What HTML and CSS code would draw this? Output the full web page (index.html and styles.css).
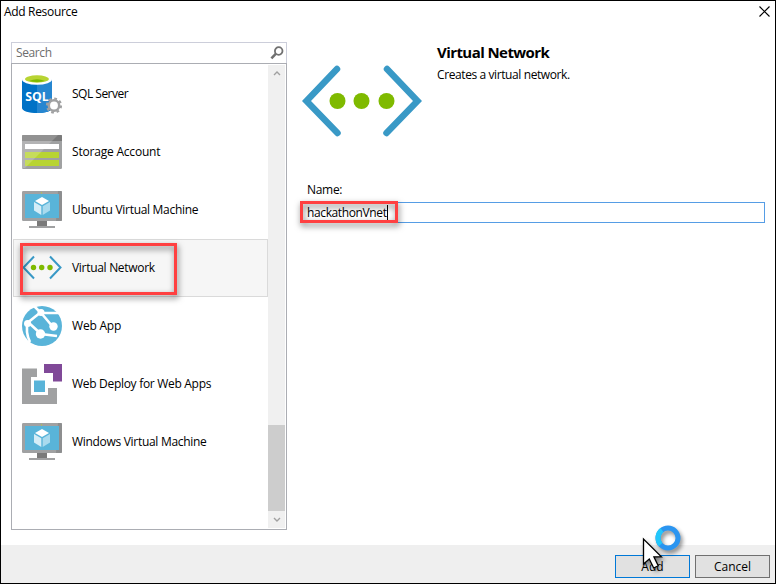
FILE: index.html
```html
<!DOCTYPE html>
<html lang="en">
<head>
<meta charset="utf-8">
<title>Add Resource</title>
<link rel="stylesheet" href="styles.css">
</head>
<body>
<svg width="0" height="0" class="defs">
  <defs>
    <symbol id="vnet" viewBox="0 0 120 120">
      <path d="M35 27 4.500 59l31 32M85 27l30.500 32-31 32" fill="none" stroke="#3999c6" stroke-width="6.500" stroke-linecap="round"/>
      <g fill="#7fba00"><circle cx="35.500" cy="59" r="8"/><circle cx="59.500" cy="59" r="8"/><circle cx="84.500" cy="59" r="8"/></g>
    </symbol>
    <symbol id="vm" viewBox="0 0 40 40">
      <rect x="0" y="1" width="40" height="30" rx="1.300" fill="#a0a1a2"/>
      <path d="M36 1h2.700q1.300 0 1.300 1.300V30q0 1-1.300 1H34z" fill="#8d8e8f"/>
      <rect x="3" y="4" width="34" height="24" fill="#59b4d9"/>
      <path d="M15 31h10v5H15z" fill="#7a7a7a"/><path d="M7 36h26v2H7z" fill="#a0a1a2"/>
      <path d="m20 7 7 4-7 4-7-4z" fill="#fff"/>
      <path d="m12 12 7.300 4.300V25L12 20.600z" fill="#d5edf7"/>
      <path d="m28 12-7.300 4.300V25l7.300-4.400z" fill="#a9daee"/>
      <circle cx="19.500" cy="2.800" r=".6" fill="#b8d432"/>
    </symbol>
  </defs>
</svg>
<div class="window">
  <header class="titlebar"><span class="title">Add Resource</span>
    <svg class="close" width="11" height="11" viewBox="0 0 11 11"><path d="m.5.5 10 10m0-10-10 10" stroke="#000" stroke-width="1.150"/></svg>
  </header>
  <main class="body">
    <section class="picker">
      <div class="search"><span>Search</span>
        <svg width="14" height="14" viewBox="0 0 14 14"><circle cx="8.700" cy="5" r="3.800" fill="none" stroke="#717171" stroke-width="1.800"/><path d="M6 7.700 1.400 12.300" stroke="#717171" stroke-width="2.600"/></svg>
      </div>
      <div class="list">
        <div class="items">
          <div class="item">
            <svg width="40" height="40" viewBox="0 0 40 40">
              <path d="M0 5v29c0 3 7 5 15 5s15-2 15-5V5z" fill="#0072c6"/>
              <path d="M15 5v34c8 0 15-2 15-5V5z" fill="#2686d0"/>
              <ellipse cx="15" cy="5.500" rx="15" ry="5.200" fill="#fff"/><ellipse cx="15" cy="5" rx="12" ry="3.700" fill="#b8d432"/><path d="M7 7q8-3.500 16 0-8 2-16 0" fill="#7fba00"/>
              <text x="3.300" y="27" class="sql" textLength="23.500" lengthAdjust="spacingAndGlyphs">SQL</text>
              <circle cx="32" cy="31.500" r="5.200" fill="#fff" stroke="#a0a1a2" stroke-width="2.500"/>
              <circle cx="32" cy="31.500" r="7" fill="none" stroke="#a0a1a2" stroke-width="2.200" stroke-dasharray="2.750 2.750"/>
            </svg><span class="t1">SQL Server</span></div>
          <div class="item">
            <svg width="40" height="40" viewBox="0 0 40 40">
              <rect x="0" y="3" width="40" height="34" rx="1.300" fill="#a0a1a2"/><path d="M1.300 3h37.400Q40 3 40 4.300V9H0V4.300Q0 3 1.300 3" fill="#929292"/><path d="M36 3h2.700Q40 3 40 4.300V9H30z" fill="#7a7a7a"/>
              <path d="M3 12h34v5H3z" fill="#fff"/><path d="M3 20h34v6H3zm0 8h34v6H3z" fill="#b8d432"/>
              <path d="M0 9h30L3 36H0z" fill="#fff" opacity=".2"/>
            </svg><span class="t2">Storage Account</span></div>
          <div class="item"><svg width="40" height="40"><use href="#vm"/></svg><span class="t3">Ubuntu Virtual Machine</span></div>
          <div class="item selected">
            <svg width="40" height="40" viewBox="0 0 40 40"><path d="M12 8.500 1.500 19.500 12 30.500M28 8.500 38.500 19.500 28 30.500" fill="none" stroke="#3999c6" stroke-width="2"/><g fill="#7fba00"><circle cx="11.500" cy="19.500" r="2.700"/><circle cx="19.700" cy="19.500" r="2.700"/><circle cx="28" cy="19.500" r="2.700"/></g></svg>
            <span class="t4">Virtual Network</span><i class="mark mark-item"></i></div>
          <div class="item">
            <svg width="40" height="40" viewBox="0 0 40 40">
              <circle cx="20" cy="20" r="20" fill="#59b4d9"/>
              <g fill="none" stroke="#fff"><path d="M12 0 19 7M20 7 37 7M19 6 4 18M20 8 31 21" stroke-width="2.600"/><path d="M6 16Q3 26 8 36M7 17l12 11 16 2" stroke-width="2.600"/></g>
              <g fill="#fff"><circle cx="19" cy="6.500" r="3.500"/><circle cx="31.500" cy="20.500" r="4.200"/><circle cx="5.500" cy="17.500" r="3.500"/><circle cx="18.500" cy="28" r="4.700"/></g>
            </svg><span class="t5">Web App</span></div>
          <div class="item">
            <svg width="40" height="40" viewBox="0 0 40 40"><path d="M0 4.500h15V13H9v18h17v-7h9v16H0z" fill="#a0a1a2"/><path d="M22 0h18v17.500h-9V9h-9z" fill="#804998"/><path d="M12 16.500h11V28H12z" fill="#59b4d9"/></svg>
            <span class="t6">Web Deploy for Web Apps</span></div>
          <div class="item"><svg width="40" height="40"><use href="#vm"/></svg><span class="t7">Windows Virtual Machine</span></div>
        </div>
        <div class="scrollbar">
          <svg width="17" height="17" viewBox="0 0 17 17"><path d="m6 10 3-3 3 3" fill="none" stroke="#a0a0a0" stroke-width="1.400"/></svg>
          <div class="thumb"></div>
          <svg width="17" height="17" viewBox="0 0 17 17"><path d="m6 7 3 3 3-3" fill="none" stroke="#a0a0a0" stroke-width="1.400"/></svg>
        </div>
      </div>
    </section>
    <section class="details">
      <div class="summary">
        <svg width="120" height="120"><use href="#vnet"/></svg>
        <div class="copy"><h1><span>Virtual Network</span></h1><p><span>Creates a virtual network.</span></p></div>
      </div>
      <div class="label"><span>Name:</span></div>
      <div class="input"><span class="value">hackathonVnet</span><i class="caret"></i><i class="mark mark-input"></i></div>
    </section>
  </main>
  <footer class="footer">
    <div class="button primary"><span>Add</span>
      <svg class="pointer" width="46" height="50" viewBox="0 0 46 50">
        <circle cx="28" cy="13" r="10" fill="none" stroke="#2b95f0" stroke-width="5"/>
        <path d="M20.500 19.600A10 10 0 0 1 21.900 5.100" fill="none" stroke="#22c7fb" stroke-width="5"/>
        <path d="M3.500 14v25l5.800-5 4.400 9 4.500-2.200-4.300-9h7.500z" fill="#fff" stroke="#000" stroke-width="1.300"/>
      </svg>
    </div>
    <div class="button"><span>Cancel</span></div>
  </footer>
</div>
</body>
</html>
```
FILE: styles.css
```css
* { box-sizing: border-box; }
body { margin: 0; font: 12px/16px "Open Sans", "Noto Sans", sans-serif; color: #000; }
.defs { display: block; position: absolute; }
.window { width: 776px; height: 584px; border: 1px solid #000; background: #fff; display: flex; flex-direction: column; overflow: hidden; }
.titlebar { height: 41px; padding: 3px 5px 0 3px; display: flex; justify-content: space-between; align-items: flex-start; }
.close { margin-top: 2px; }
.title { letter-spacing: -.32px; }
.body { flex: 1; display: flex; padding-left: 10px; }
.picker { width: 276px; }
.search { height: 21px; border: 1px solid #ccceda; border-bottom: 0; padding: 0 2px 0 4px; display: flex; justify-content: space-between; align-items: center; color: #6d6d6d; letter-spacing: -.4px; }
.search svg { margin-top: -1px; }
.list { height: 467px; border: 1px solid #abadb3; padding: 1px; display: flex; }
.items { width: 255px; }
.item { position: relative; height: 58px; padding-left: 8px; border: 1px solid transparent; display: flex; align-items: center; gap: 10px; white-space: nowrap; letter-spacing: -.3px; }
.t1 { letter-spacing: -.5px; }
.t2, .t5 { letter-spacing: -.2px; }
.selected { background: #f6f6f6; border-color: #dadada; }
.sql { font: bold 12.500px "Open Sans", sans-serif; letter-spacing: 0; fill: #fff; }
.scrollbar { width: 17px; background: #f0f0f0; display: flex; flex-direction: column; }
.thumb { height: 86px; margin-top: auto; background: #cdcdcd; }
.mark { position: absolute; border: 3px solid #ff4041; filter: drop-shadow(1px 3px 3px rgba(0,0,0,.55)); }
.mark-item { left: 6px; top: 3px; width: 157px; height: 52px; }
.mark-input { left: -3px; top: -2px; width: 98px; height: 22px; }
.details { margin-left: 15px; width: 463px; }
.summary { display: flex; gap: 15px; }
.copy { white-space: nowrap; }
h1 { margin: 0; font-size: 15px; line-height: 20px; letter-spacing: -.57px; }
p { margin: 5px 0 0; letter-spacing: -.4px; }
.label { margin: 20px 0 0 5px; letter-spacing: -.3px; }
.input { position: relative; height: 21px; margin-top: 4px; border: 1px solid #569de5; padding-left: 4px; display: flex; align-items: center; }
.value { letter-spacing: -.38px; }
.caret { width: 1px; height: 15px; background: #000; }
.footer { height: 38px; background: #efefef; display: flex; justify-content: flex-end; gap: 5px; padding: 10px 5px 5px; }
.button { position: relative; width: 75px; height: 23px; border: 1px solid #707070; background: #e1e1e1; display: flex; justify-content: center; align-items: center; }
.primary { border-color: #0078d7; }
.pointer { position: absolute; left: 24px; top: -31px; filter: drop-shadow(2px 3px 2px rgba(0,0,0,.45)); }
```
